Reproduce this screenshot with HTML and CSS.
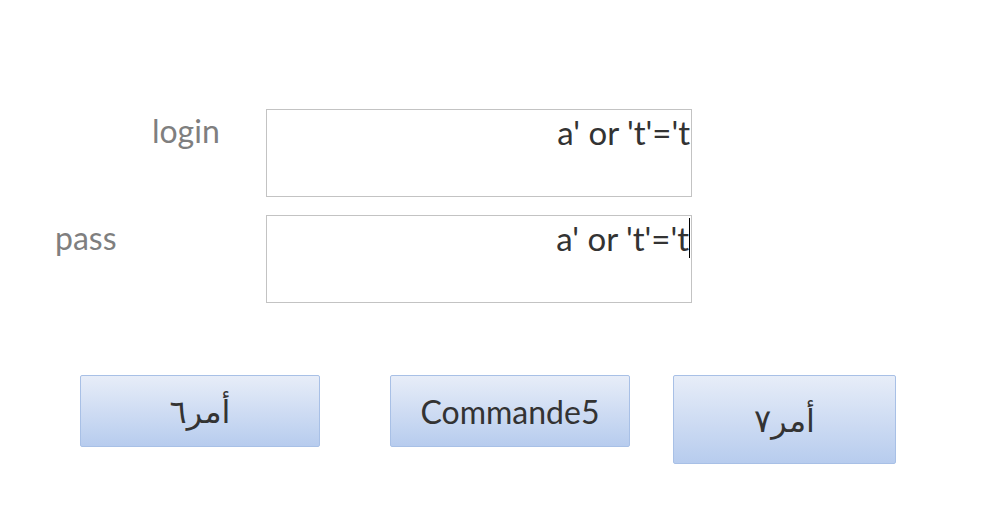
FILE: index.html
```html
<!DOCTYPE html>
<html lang="fr">
<head>
  <meta charset="UTF-8">
  <title>Connexion</title>
  <link rel="stylesheet" href="styles.css">
</head>
<body>
  <div class="form">
    <div class="row">
      <label class="label label-login">login</label>
      <div class="textbox"><span class="value">a' or 't'='t</span></div>
    </div>

    <div class="row">
      <label class="label label-pass">pass</label>
      <div class="textbox"><span class="value caret">a' or 't'='t</span></div>
    </div>

    <div class="buttons">
      <button class="btn btn-6" type="button" dir="rtl">أمر٦</button>
      <button class="btn btn-5" type="button">Commande5</button>
      <button class="btn btn-7" type="button" dir="rtl">أمر٧</button>
    </div>
  </div>
</body>
</html>
```

FILE: styles.css
```css
body {
  margin: 0;
  background: #fff;
  font-family: Lato, "DejaVu Sans", sans-serif;
}
.form {
  padding-top: 109px;
}
.row {
  display: flex;
  margin-bottom: 18px;
}
.label {
  width: 266px;
  box-sizing: border-box;
  font-size: 32px;
  line-height: 36px;
  color: #7f7f7f;
}
.label-login {
  padding-left: 152px;
  padding-top: 4px;
}
.label-pass {
  padding-left: 55px;
  padding-top: 5px;
}
.textbox {
  width: 426px;
  height: 88px;
  box-sizing: border-box;
  border: 1px solid #c3c3c3;
  text-align: right;
  padding: 4px 1px 0 0;
}
.value {
  font-size: 33px;
  line-height: 36px;
  color: #333;
}
.caret {
  border-right: 1px solid #000;
}
.buttons {
  display: flex;
  align-items: flex-start;
  padding-left: 80px;
  margin-top: 72px;
}
.btn {
  box-sizing: border-box;
  border: 1px solid #a8c0e6;
  border-radius: 2px;
  background: linear-gradient(#e7edf8, #b7ccee);
  font-family: Lato, "DejaVu Sans", sans-serif;
  font-size: 32px;
  color: #333;
  padding: 0;
}
.btn-6 {
  width: 240px;
  height: 72px;
}
.btn-5 {
  width: 240px;
  height: 72px;
  margin-left: 70px;
}
.btn-7 {
  width: 223px;
  height: 89px;
  margin-left: 43px;
}
```
